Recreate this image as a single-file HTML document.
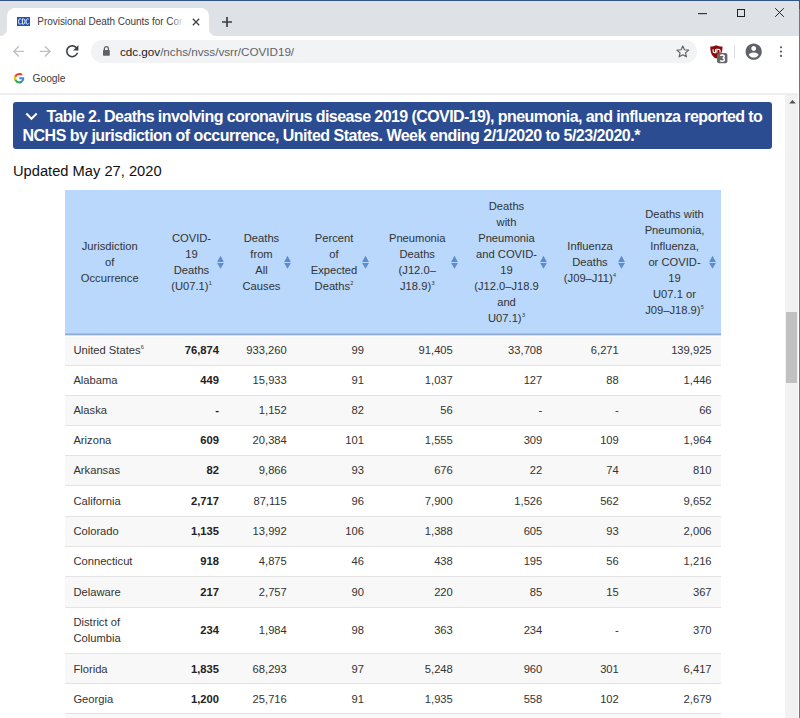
<!DOCTYPE html>
<html><head><meta charset="utf-8">
<style>
*{margin:0;padding:0;box-sizing:border-box}
html,body{width:800px;height:718px;overflow:hidden;background:#fff;font-family:"Liberation Sans",sans-serif}
.a{position:absolute}
svg.a{overflow:visible}
#strip{left:0;top:0;width:800px;height:36px;background:#dee1e6}
#wcut{left:0;top:22px;width:220px;height:14px;background:#fff}
#gl{left:0;top:8px;width:7px;height:28px;background:#dee1e6;border-bottom-right-radius:7px}
#gr{left:209px;top:8px;width:591px;height:28px;background:#dee1e6;border-bottom-left-radius:7px}
#topline{left:0;top:0;width:800px;height:1px;background:#335585}
#rborder{left:799px;top:0;width:1px;height:718px;background:#767676}
#rborder2{left:799px;top:0;width:1px;height:9px;background:#335585}
#tab{left:7px;top:8px;width:202px;height:28px;background:#fff;border-radius:8px 8px 0 0}
#tabtitle{left:37.3px;top:15px;font-size:10px;color:#3c4043;white-space:nowrap;width:148px;overflow:hidden;line-height:13px;letter-spacing:-0.04px}
#fade{left:171px;top:12px;width:15px;height:18px;background:linear-gradient(90deg,rgba(255,255,255,0),#fff 85%)}
#omni{left:91px;top:40px;width:606px;height:23px;background:#f1f3f4;border-radius:12px}
#url{left:120px;top:45px;font-size:11.7px;color:#5f6368;white-space:nowrap;line-height:14px;letter-spacing:-0.02px}
#url b{font-weight:normal;color:#202124}
#bmline{left:0;top:93px;width:798px;height:2px;background:#eceef0}
#gtext{left:32.4px;top:72.5px;font-size:10.3px;color:#3c4043;line-height:12px;letter-spacing:0px}
#sb{left:785px;top:95px;width:13px;height:623px;background:#f1f1f1}
#thumb{left:786px;top:311.5px;width:11px;height:71px;background:#c1c1c1}
#box{left:13px;top:102px;width:759px;height:47px;background:#2c4c92;border-radius:3px}
.ttl{position:absolute;color:#fff;font-weight:bold;font-size:16px;line-height:20px;white-space:nowrap}
#upd{left:13px;top:163px;font-size:14.7px;color:#111;line-height:17px}
#thead{left:65px;top:190px;width:656px;height:143px;background:#b9d8fb}
#thb{left:65px;top:333px;width:656px;height:1px;background:#a3c0e8}
#thb2{left:65px;top:334px;width:656px;height:1px;background:#8ea9d3}
#thb3{left:65px;top:335px;width:656px;height:1px;background:#dcdfe6}
.th{position:absolute;top:190px;height:143px;display:flex;align-items:center;justify-content:center;text-align:center;font-size:11.2px;line-height:16px;color:#333}
.th span{display:block;padding-right:1.5px}
.sort{position:absolute;top:256px;width:7px;height:14px;overflow:visible}
sup{font-size:5.5px;line-height:6px;vertical-align:top;position:relative;top:2.5px;margin-left:0.3px}
.row{position:absolute;left:65px;width:656px;border-top:1px solid #e3e3e3}
.row.g{background:#f8f8f8}
.c{position:absolute;top:0;height:100%;display:flex;align-items:center;font-size:11.2px;color:#333;line-height:16px}
.c.r{justify-content:flex-end}
.c{padding-bottom:1px}
.first .c{padding-bottom:2.5px}
.low .c{padding-bottom:0;padding-top:1px}
.c.l{padding-left:8.4px}
.c b{font-weight:bold;color:#222}
</style></head><body>
<div class="a" id="strip"></div>
<div class="a" id="wcut"></div>
<div class="a" id="gl"></div>
<div class="a" id="gr"></div>
<div class="a" id="topline"></div>
<div class="a" id="tab"></div>
<!-- favicon -->
<svg class="a" style="left:17px;top:17px" width="13" height="9" viewBox="0 0 13 9"><rect width="13" height="9" fill="#2352ab"/><path d="M4.3 2.6Q3.8 1.8 2.9 1.8Q1.5 1.8 1.5 4.5Q1.5 7.2 2.9 7.2Q3.8 7.2 4.3 6.4" fill="none" stroke="#fff" stroke-width="0.9"/><path d="M5.4 1.9H6.4Q8.1 1.9 8.1 4.5Q8.1 7.1 6.4 7.1H5.4Z" fill="none" stroke="#fff" stroke-width="0.9"/><path d="M11.8 2.6Q11.3 1.8 10.4 1.8Q9 1.8 9 4.5Q9 7.2 10.4 7.2Q11.3 7.2 11.8 6.4" fill="none" stroke="#fff" stroke-width="0.9"/></svg>
<div class="a" id="tabtitle">Provisional Death Counts for Coronavirus</div>
<div class="a" id="fade"></div>
<!-- tab close -->
<svg class="a" style="left:191.5px;top:18px" width="8" height="8" viewBox="0 0 8 8"><path d="M0.8 0.8L7.2 7.2M7.2 0.8L0.8 7.2" stroke="#3c4043" stroke-width="1.25"/></svg>
<!-- new tab + -->
<svg class="a" style="left:222px;top:17px" width="10" height="10" viewBox="0 0 10 10"><path d="M5 0V10M0 5H10" stroke="#3c4043" stroke-width="1.7"/></svg>
<!-- window controls -->
<svg class="a" style="left:697.5px;top:12.5px" width="9" height="1.2" viewBox="0 0 9 1.2"><rect width="9" height="1.2" fill="#333"/></svg>
<svg class="a" style="left:737px;top:8.5px" width="8" height="8" viewBox="0 0 8 8"><rect x="0.5" y="0.5" width="7" height="7" fill="none" stroke="#222" stroke-width="1"/></svg>
<svg class="a" style="left:775px;top:8px" width="9" height="9" viewBox="0 0 9 9"><path d="M0.2 0.2L8.8 8.8M8.8 0.2L0.2 8.8" stroke="#222" stroke-width="1"/></svg>
<!-- nav -->
<svg class="a" style="left:10px;top:42.85px" width="16.8" height="16.8" viewBox="0 0 24 24"><path d="M20 11H7.83l5.59-5.59L12 4l-8 8 8 8 1.41-1.41L7.83 13H20v-2z" fill="#bdc1c6"/></svg>
<svg class="a" style="left:37.1px;top:42.85px" width="16.8" height="16.8" viewBox="0 0 24 24"><path d="M12 4l-1.41 1.41L16.17 11H4v2h12.17l-5.58 5.59L12 20l8-8z" fill="#bdc1c6"/></svg>
<svg class="a" style="left:63.1px;top:42px" width="18.5" height="18.5" viewBox="0 0 24 24"><path d="M17.65 6.35C16.2 4.9 14.21 4 12 4c-4.42 0-7.99 3.58-7.99 8s3.57 8 7.99 8c3.73 0 6.84-2.55 7.73-6h-2.08c-.82 2.33-3.04 4-5.65 4-3.31 0-6-2.69-6-6s2.69-6 6-6c1.66 0 3.14.69 4.22 1.78L13 11h7V4l-2.35 2.35z" fill="#3c4043"/></svg>
<div class="a" id="omni"></div>
<!-- lock -->
<svg class="a" style="left:102px;top:45px" width="9" height="11" viewBox="0 0 9 11"><rect x="1" y="5" width="6.8" height="5.7" rx="0.6" fill="#5f6368"/><path d="M2.4 5.2V3.6A2 2 0 0 1 6.4 3.6V5.2" fill="none" stroke="#5f6368" stroke-width="1.3"/></svg>
<div class="a" id="url"><b>cdc.gov</b>/nchs/nvss/vsrr/COVID19/</div>
<!-- star -->
<svg class="a" style="left:674.9px;top:43.9px" width="15.6" height="15.2" viewBox="0 0 24 24" preserveAspectRatio="none"><path d="M12 3.2l2.6 5.9 6.4.6-4.8 4.3 1.4 6.3L12 17l-5.6 3.3 1.4-6.3L3 9.7l6.4-.6z" fill="none" stroke="#5f6368" stroke-width="1.8" stroke-linejoin="round"/></svg>
<!-- ublock -->
<svg class="a" style="left:709.5px;top:44.5px" width="13" height="14" viewBox="0 0 13 14"><path d="M6.2 0.2C7.8 1.1 10 1.5 12.5 1.6C12.6 7.2 10.6 11.6 6.1 13.6C1.6 11.6 0.2 7.2 0.3 1.6C2.6 1.5 4.6 1.1 6.2 0.2Z" fill="#8b0a0a"/><path d="M3.1 4.2V6.6Q3.1 7.6 4.2 7.6H5.5V4.2M6.9 7.7V4.4H8.7Q10.1 4.4 10.1 5.8V7.7" fill="none" stroke="#fff" stroke-width="1.1"/></svg>
<svg class="a" style="left:717.3px;top:52.8px" width="10.4" height="10.2" viewBox="0 0 10.4 10.2"><rect x="0" y="0" width="10.4" height="10.2" rx="2" fill="#666"/><path d="M3.2 2.6Q3.8 2 5.2 2Q7.2 2 7.2 3.5Q7.2 4.9 5.6 5Q7.4 5.1 7.4 6.6Q7.4 8.3 5.2 8.3Q3.8 8.3 3.1 7.6" fill="none" stroke="#fff" stroke-width="1.5"/></svg>
<div class="a" style="left:734px;top:45px;width:1px;height:13px;background:#dadce0"></div>
<!-- profile -->
<svg class="a" style="left:744.1px;top:41.56px" width="19.4" height="19.4" viewBox="0 0 24 24"><path d="M12 2C6.48 2 2 6.48 2 12s4.48 10 10 10 10-4.48 10-10S17.52 2 12 2zm0 3c1.66 0 3 1.34 3 3s-1.34 3-3 3-3-1.34-3-3 1.34-3 3-3zm0 14.2c-2.5 0-4.71-1.28-6-3.22.03-1.99 4-3.08 6-3.08 1.99 0 5.97 1.09 6 3.08-1.29 1.94-3.5 3.22-6 3.22z" fill="#5f6368"/></svg>
<!-- menu -->
<svg class="a" style="left:778px;top:45px" width="6" height="13" viewBox="0 0 6 13"><circle cx="3" cy="2.35" r="1.15" fill="#5f6368"/><circle cx="3" cy="6.6" r="1.15" fill="#5f6368"/><circle cx="3" cy="10.9" r="1.15" fill="#5f6368"/></svg>
<!-- google G -->
<svg class="a" style="left:13.5px;top:73px" width="10.4" height="10.4" viewBox="0 0 24 24"><path d="M23.5 12.27c0-.85-.08-1.67-.22-2.45H12v4.64h6.44a5.5 5.5 0 0 1-2.39 3.61v3h3.86c2.26-2.08 3.59-5.15 3.59-8.8z" fill="#4285f4"/><path d="M12 24c3.24 0 5.95-1.07 7.93-2.9l-3.86-3c-1.08.72-2.45 1.15-4.07 1.15-3.13 0-5.78-2.11-6.73-4.96H1.28v3.1A12 12 0 0 0 12 24z" fill="#34a853"/><path d="M5.27 14.29A7.2 7.2 0 0 1 4.9 12c0-.8.14-1.57.38-2.29V6.62H1.28A12 12 0 0 0 0 12c0 1.94.46 3.77 1.28 5.38z" fill="#fbbc05"/><path d="M12 4.75c1.77 0 3.35.61 4.6 1.8l3.42-3.42C17.95 1.19 15.24 0 12 0 7.31 0 3.26 2.69 1.28 6.62l4 3.1C6.22 6.86 8.87 4.75 12 4.75z" fill="#ea4335"/></svg>
<div class="a" id="gtext">Google</div>
<div class="a" id="bmline"></div>
<div class="a" id="sb"></div>
<svg class="a" style="left:788.5px;top:100.3px" width="7" height="4" viewBox="0 0 7 4"><path d="M3.5 0L6.8 3.6H0.2Z" fill="#505050"/></svg>
<div class="a" id="thumb"></div>
<div class="a" id="rborder"></div>
<div class="a" id="rborder2"></div>

<div class="a" id="box"></div>
<svg class="a" style="left:25px;top:111.5px" width="13" height="9" viewBox="0 0 13 9"><path d="M1.3 1.5L6.5 6.7L11.7 1.5" fill="none" stroke="#fff" stroke-width="2.1"/></svg>
<div class="ttl" style="left:46.5px;top:106.7px;letter-spacing:-0.58px">Table 2. Deaths involving coronavirus disease 2019 (COVID-19), pneumonia, and influenza reported to</div>
<div class="ttl" style="left:22.5px;top:126.1px;letter-spacing:-0.5px">NCHS by jurisdiction of occurrence, United States. Week ending 2/1/2020 to 5/23/2020.*</div>
<div class="a" id="upd">Updated May 27, 2020</div>

<div class="a" id="thead"></div>
<div class="a" id="thb"></div><div class="a" id="thb2"></div><div class="a" id="thb3"></div>
<div class="th" style="left:65px;width:91px"><span>Jurisdiction<br>of<br>Occurrence</span></div>
<div class="th" style="left:156px;width:72.5px"><span>COVID-<br>19<br>Deaths<br>(U07.1)<sup>1</sup></span></div>
<svg class="sort" style="left:216.7px" viewBox="0 0 7 14"><path d="M3.5 -0.3L6.9 6H0.1Z M0.1 7H6.9L3.5 12.8Z" fill="#5e8cd0"/></svg>
<div class="th" style="left:228.5px;width:67.5px"><span>Deaths<br>from<br>All<br>Causes</span></div>
<svg class="sort" style="left:284.0px" viewBox="0 0 7 14"><path d="M3.5 -0.3L6.9 6H0.1Z M0.1 7H6.9L3.5 12.8Z" fill="#5e8cd0"/></svg>
<div class="th" style="left:296px;width:77.5px"><span>Percent<br>of<br>Expected<br>Deaths<sup>2</sup></span></div>
<svg class="sort" style="left:361.5px" viewBox="0 0 7 14"><path d="M3.5 -0.3L6.9 6H0.1Z M0.1 7H6.9L3.5 12.8Z" fill="#5e8cd0"/></svg>
<div class="th" style="left:373.5px;width:89.0px"><span>Pneumonia<br>Deaths<br>(J12.0&ndash;<br>J18.9)<sup>3</sup></span></div>
<svg class="sort" style="left:450.5px" viewBox="0 0 7 14"><path d="M3.5 -0.3L6.9 6H0.1Z M0.1 7H6.9L3.5 12.8Z" fill="#5e8cd0"/></svg>
<div class="th" style="left:462.5px;width:89.5px"><span>Deaths<br>with<br>Pneumonia<br>and COVID-<br>19<br>(J12.0&ndash;J18.9<br>and<br>U07.1)<sup>3</sup></span></div>
<svg class="sort" style="left:540.0px" viewBox="0 0 7 14"><path d="M3.5 -0.3L6.9 6H0.1Z M0.1 7H6.9L3.5 12.8Z" fill="#5e8cd0"/></svg>
<div class="th" style="left:552px;width:77.5px"><span>Influenza<br>Deaths<br>(J09&ndash;J11)<sup>4</sup></span></div>
<svg class="sort" style="left:617.5px" viewBox="0 0 7 14"><path d="M3.5 -0.3L6.9 6H0.1Z M0.1 7H6.9L3.5 12.8Z" fill="#5e8cd0"/></svg>
<div class="th" style="left:629.5px;width:91.5px"><span>Deaths with<br>Pneumonia,<br>Influenza,<br>or COVID-<br>19<br>U07.1 or<br>J09&ndash;J18.9)<sup>5</sup></span></div>
<svg class="sort" style="left:709.0px" viewBox="0 0 7 14"><path d="M3.5 -0.3L6.9 6H0.1Z M0.1 7H6.9L3.5 12.8Z" fill="#5e8cd0"/></svg>
<div class="row g first" style="top:336px;height:29px;border-top-color:#fcfcfc;"><div class="c l" style="left:0;width:91px"><span>United States<sup>6</sup></span></div><div class="c r" style="left:0;width:154px"><b>76,874</b></div><div class="c r" style="left:0;width:221.8px">933,260</div><div class="c r" style="left:0;width:299px">99</div><div class="c r" style="left:0;width:387.8px">91,405</div><div class="c r" style="left:0;width:477.29999999999995px">33,708</div><div class="c r" style="left:0;width:553.8px">6,271</div><div class="c r" style="left:0;width:646.6px">139,925</div></div>
<div class="row" style="top:365px;height:30px;"><div class="c l" style="left:0;width:91px"><span>Alabama</span></div><div class="c r" style="left:0;width:154px"><b>449</b></div><div class="c r" style="left:0;width:221.8px">15,933</div><div class="c r" style="left:0;width:299px">91</div><div class="c r" style="left:0;width:387.8px">1,037</div><div class="c r" style="left:0;width:477.29999999999995px">127</div><div class="c r" style="left:0;width:553.8px">88</div><div class="c r" style="left:0;width:646.6px">1,446</div></div>
<div class="row g" style="top:395px;height:30px;"><div class="c l" style="left:0;width:91px"><span>Alaska</span></div><div class="c r" style="left:0;width:154px"><b>-</b></div><div class="c r" style="left:0;width:221.8px">1,152</div><div class="c r" style="left:0;width:299px">82</div><div class="c r" style="left:0;width:387.8px">56</div><div class="c r" style="left:0;width:477.29999999999995px">-</div><div class="c r" style="left:0;width:553.8px">-</div><div class="c r" style="left:0;width:646.6px">66</div></div>
<div class="row" style="top:425px;height:30px;"><div class="c l" style="left:0;width:91px"><span>Arizona</span></div><div class="c r" style="left:0;width:154px"><b>609</b></div><div class="c r" style="left:0;width:221.8px">20,384</div><div class="c r" style="left:0;width:299px">101</div><div class="c r" style="left:0;width:387.8px">1,555</div><div class="c r" style="left:0;width:477.29999999999995px">309</div><div class="c r" style="left:0;width:553.8px">109</div><div class="c r" style="left:0;width:646.6px">1,964</div></div>
<div class="row g" style="top:455px;height:30px;"><div class="c l" style="left:0;width:91px"><span>Arkansas</span></div><div class="c r" style="left:0;width:154px"><b>82</b></div><div class="c r" style="left:0;width:221.8px">9,866</div><div class="c r" style="left:0;width:299px">93</div><div class="c r" style="left:0;width:387.8px">676</div><div class="c r" style="left:0;width:477.29999999999995px">22</div><div class="c r" style="left:0;width:553.8px">74</div><div class="c r" style="left:0;width:646.6px">810</div></div>
<div class="row" style="top:485px;height:31px;"><div class="c l" style="left:0;width:91px"><span>California</span></div><div class="c r" style="left:0;width:154px"><b>2,717</b></div><div class="c r" style="left:0;width:221.8px">87,115</div><div class="c r" style="left:0;width:299px">96</div><div class="c r" style="left:0;width:387.8px">7,900</div><div class="c r" style="left:0;width:477.29999999999995px">1,526</div><div class="c r" style="left:0;width:553.8px">562</div><div class="c r" style="left:0;width:646.6px">9,652</div></div>
<div class="row g" style="top:516px;height:30px;"><div class="c l" style="left:0;width:91px"><span>Colorado</span></div><div class="c r" style="left:0;width:154px"><b>1,135</b></div><div class="c r" style="left:0;width:221.8px">13,992</div><div class="c r" style="left:0;width:299px">106</div><div class="c r" style="left:0;width:387.8px">1,388</div><div class="c r" style="left:0;width:477.29999999999995px">605</div><div class="c r" style="left:0;width:553.8px">93</div><div class="c r" style="left:0;width:646.6px">2,006</div></div>
<div class="row" style="top:546px;height:30px;"><div class="c l" style="left:0;width:91px"><span>Connecticut</span></div><div class="c r" style="left:0;width:154px"><b>918</b></div><div class="c r" style="left:0;width:221.8px">4,875</div><div class="c r" style="left:0;width:299px">46</div><div class="c r" style="left:0;width:387.8px">438</div><div class="c r" style="left:0;width:477.29999999999995px">195</div><div class="c r" style="left:0;width:553.8px">56</div><div class="c r" style="left:0;width:646.6px">1,216</div></div>
<div class="row g" style="top:576px;height:31px;"><div class="c l" style="left:0;width:91px"><span>Delaware</span></div><div class="c r" style="left:0;width:154px"><b>217</b></div><div class="c r" style="left:0;width:221.8px">2,757</div><div class="c r" style="left:0;width:299px">90</div><div class="c r" style="left:0;width:387.8px">220</div><div class="c r" style="left:0;width:477.29999999999995px">85</div><div class="c r" style="left:0;width:553.8px">15</div><div class="c r" style="left:0;width:646.6px">367</div></div>
<div class="row" style="top:607px;height:46px;"><div class="c l" style="left:0;width:91px"><span>District of<br>Columbia</span></div><div class="c r" style="left:0;width:154px"><b>234</b></div><div class="c r" style="left:0;width:221.8px">1,984</div><div class="c r" style="left:0;width:299px">98</div><div class="c r" style="left:0;width:387.8px">363</div><div class="c r" style="left:0;width:477.29999999999995px">234</div><div class="c r" style="left:0;width:553.8px">-</div><div class="c r" style="left:0;width:646.6px">370</div></div>
<div class="row g low" style="top:653px;height:30px;"><div class="c l" style="left:0;width:91px"><span>Florida</span></div><div class="c r" style="left:0;width:154px"><b>1,835</b></div><div class="c r" style="left:0;width:221.8px">68,293</div><div class="c r" style="left:0;width:299px">97</div><div class="c r" style="left:0;width:387.8px">5,248</div><div class="c r" style="left:0;width:477.29999999999995px">960</div><div class="c r" style="left:0;width:553.8px">301</div><div class="c r" style="left:0;width:646.6px">6,417</div></div>
<div class="row low" style="top:683px;height:30px;"><div class="c l" style="left:0;width:91px"><span>Georgia</span></div><div class="c r" style="left:0;width:154px"><b>1,200</b></div><div class="c r" style="left:0;width:221.8px">25,716</div><div class="c r" style="left:0;width:299px">91</div><div class="c r" style="left:0;width:387.8px">1,935</div><div class="c r" style="left:0;width:477.29999999999995px">558</div><div class="c r" style="left:0;width:553.8px">102</div><div class="c r" style="left:0;width:646.6px">2,679</div></div>
<div class="row g low" style="top:713px;height:30px;"><div class="c l" style="left:0;width:91px"><span></span></div><div class="c r" style="left:0;width:154px"></div><div class="c r" style="left:0;width:221.8px"></div><div class="c r" style="left:0;width:299px"></div><div class="c r" style="left:0;width:387.8px"></div><div class="c r" style="left:0;width:477.29999999999995px"></div><div class="c r" style="left:0;width:553.8px"></div><div class="c r" style="left:0;width:646.6px"></div></div>
</body></html>
